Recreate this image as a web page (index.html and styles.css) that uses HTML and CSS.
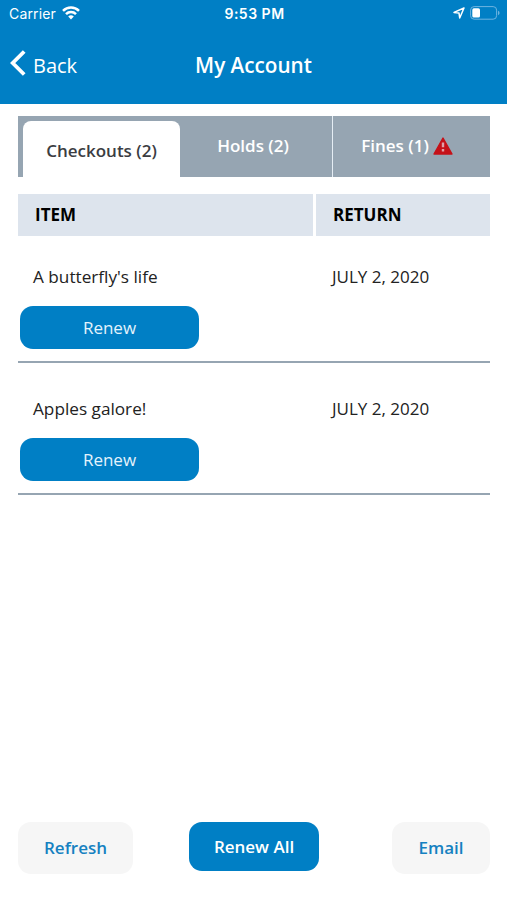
FILE: index.html
```
<!DOCTYPE html>
<html lang="en">
<head>
    <meta charset="UTF-8">
    <meta name="viewport" content="width=device-width, initial-scale=1.0">
    <title>My Account</title>
    <link rel="stylesheet" href="styles.css">
</head>
<body>
    <header class="header">
        <div class="status-bar">
            <div class="carrier">
                <span>Carrier</span>
                <svg class="wifi" width="18" height="14" viewBox="0 0 18 14" fill="none" stroke="#fff" stroke-width="2.5">
                    <path d="M1 4.9C5.5 0.4 12.5 0.4 17 4.9"/>
                    <path d="M4 8.2C6.8 5.4 11.2 5.4 14 8.2"/>
                    <path d="M6.2 10.5Q9 7.9 11.8 10.5L9 13.4Z" fill="#fff" stroke="none"/>
                </svg>
            </div>
            <div class="time">9:53 PM</div>
            <div class="indicators">
                <svg width="12" height="12" viewBox="0 0 12 12" fill="none" stroke="#fff" stroke-width="1.5" stroke-linejoin="round">
                    <path d="M11 1L1 5.4L6 6L6.7 11Z"/>
                </svg>
                <svg width="30" height="14" viewBox="0 0 30 14">
                    <rect x="0.6" y="0.6" width="26" height="12.6" rx="3.5" fill="none" stroke="#6eb4e0" stroke-width="1"/>
                    <rect x="2.3" y="2.3" width="7.7" height="9.2" rx="1.6" fill="#fff"/>
                    <path d="M28 4.8Q29.6 5.4 29.6 7T28 9.2Z" fill="#6eb4e0"/>
                </svg>
            </div>
        </div>
        <div class="nav">
            <a class="back">
                <svg width="16" height="26" viewBox="0 0 16 26" fill="none" stroke="#fff" stroke-width="3.8">
                    <path d="M14.2 1.5L2.7 13L14.2 24.5"/>
                </svg>
                <span>Back</span>
            </a>
            <h1>My Account</h1>
        </div>
    </header>

    <main class="content">
        <div class="tabs">
            <div class="tab active"><span>Checkouts (2)</span></div>
            <div class="tab holds"><span>Holds (2)</span></div>
            <div class="tab fines">
                <span>Fines (1)</span>
                <svg width="20" height="18" viewBox="0 0 20 18">
                    <path d="M10 1L19 17H1Z" fill="#c51118" stroke="#c51118" stroke-width="1.4" stroke-linejoin="round"/>
                    <path d="M10 5.5V10.3M10 12.1V14.5" stroke="#dfa0a8" stroke-width="2.4"/>
                </svg>
            </div>
        </div>

        <div class="table-head">
            <div class="item">ITEM</div>
            <div class="return">RETURN</div>
        </div>

        <div class="row">
            <div class="details">
                <p class="title">A butterfly's life</p>
                <p class="date">JULY 2, 2020</p>
            </div>
            <button class="renew">Renew</button>
        </div>
        <div class="row">
            <div class="details">
                <p class="title">Apples galore!</p>
                <p class="date">JULY 2, 2020</p>
            </div>
            <button class="renew">Renew</button>
        </div>
    </main>

    <footer class="footer">
        <button class="refresh">Refresh</button>
        <button class="renew-all">Renew All</button>
        <button class="email">Email</button>
    </footer>
</body>
</html>
```
FILE: styles.css
```
* {
    box-sizing: border-box;
}

body {
    display: flex;
    flex-direction: column;
    height: 900px;
    margin: 0;
    background-color: #fff;
    font-family: "Open Sans", sans-serif;
    font-size: 17px;
    color: #222;
}

h1,
p {
    margin: 0;
}

svg {
    display: block;
    flex: none;
}

button {
    border: none;
    border-radius: 13px;
    padding: 0;
    font-family: inherit;
    font-size: 17px;
    font-weight: 600;
}

.header {
    height: 103.5px;
    background-color: #007fc5;
    color: #fff;
}

.status-bar {
    display: grid;
    grid-template-columns: 1fr auto 1fr;
    align-items: center;
    height: 27px;
    padding: 0 7px 0 9px;
    font-family: Inter, sans-serif;
    font-size: 14px;
}

.carrier {
    display: flex;
    align-items: center;
    gap: 6px;
    letter-spacing: 0.15px;
}

.carrier svg {
    margin-top: -2px;
}

.time {
    font-weight: 600;
    letter-spacing: 0.5px;
}

.indicators {
    display: flex;
    align-items: center;
    justify-content: flex-end;
    gap: 5px;
}

.indicators svg {
    margin-top: -1px;
}

.nav {
    display: grid;
    grid-template-columns: 1fr auto 1fr;
    align-items: center;
    height: 76px;
    padding: 0 10px;
}

.back {
    display: flex;
    align-items: center;
    gap: 7px;
    font-size: 20px;
}

.back svg {
    margin-top: -4px;
}

.nav h1 {
    font-size: 20.7px;
    font-weight: 600;
}

.content {
    flex: 1;
    padding: 12.5px 17px 0 18px;
}

.tabs {
    display: flex;
    height: 60.5px;
    padding-left: 5px;
    background-color: #96a5b2;
    font-weight: 600;
}

.tab {
    display: flex;
    align-items: center;
    justify-content: center;
    padding-bottom: 1px;
    color: #fff;
}

.tab.active {
    width: 157px;
    margin-top: 5px;
    padding-top: 4px;
    border-radius: 8px 8px 0 0;
    background-color: #fff;
    color: #3b3d42;
}

.holds {
    width: 153px;
    padding-right: 6px;
    border-right: 1px solid #e5edf4;
}

.fines {
    flex: 1;
    gap: 4px;
    padding-right: 9px;
}

.table-head {
    display: flex;
    gap: 3px;
    height: 42px;
    margin-top: 17.5px;
    font-weight: 700;
    line-height: 42px;
    color: #000;
}

.item {
    width: 295px;
    padding-left: 17px;
    background-color: #dde4ed;
}

.return {
    flex: 1;
    padding-left: 17px;
    background-color: #dde4ed;
}

.row {
    height: 132px;
    padding: 34px 0 0 2px;
    border-bottom: 2px solid #96a5b2;
}

.table-head + .row {
    height: 127px;
    padding-top: 29px;
}

.details {
    display: flex;
    font-size: 17.2px;
    line-height: 24px;
}

.title {
    width: 312px;
    padding-left: 13px;
}

.date {
    font-size: 17px;
}

.renew {
    width: 179px;
    height: 43px;
    margin-top: 17px;
    background-color: #007fc5;
    color: #e4f3fc;
    font-weight: 400;
}

.footer {
    display: flex;
    align-items: flex-start;
    justify-content: space-between;
    height: 78px;
    padding: 0 17px 0 18px;
}

.refresh,
.email {
    height: 52px;
    padding-bottom: 2px;
    background-color: #f6f6f6;
    color: #1581c1;
}

.refresh {
    width: 115px;
}

.email {
    width: 98px;
}

.renew-all {
    width: 130px;
    height: 49px;
    margin-right: 17px;
    background-color: #007fc5;
    color: #fff;
}
```
